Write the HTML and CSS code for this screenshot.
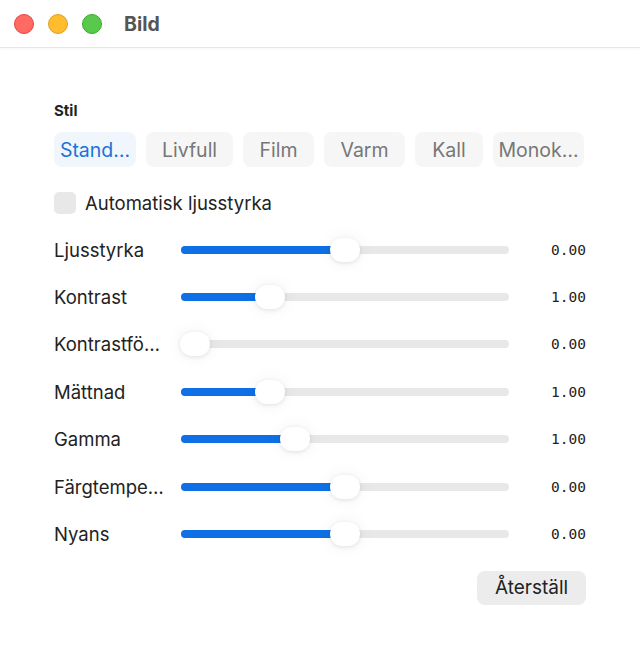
FILE: index.html
```html
<!DOCTYPE html>
<html lang="sv">
<head>
  <meta charset="UTF-8">
  <title>Bild</title>
  <link rel="stylesheet" href="styles.css">
</head>
<body>

  <div class="titlebar">
    <span class="light red"></span>
    <span class="light yellow"></span>
    <span class="light green"></span>
    <span class="title">Bild</span>
  </div>

  <div class="panel">
    <div class="section-label">Stil</div>
    <div class="styles">
      <div class="pill selected">Stand…</div>
      <div class="pill">Livfull</div>
      <div class="pill">Film</div>
      <div class="pill">Varm</div>
      <div class="pill">Kall</div>
      <div class="pill">Monok…</div>
    </div>

    <label class="check">
      <span class="box"></span>
      Automatisk ljusstyrka
    </label>

    <div class="sliders">
      <div class="row">
        <span class="name">Ljusstyrka</span>
        <div class="track"><div class="fill" style="width: 164px"></div><div class="thumb" style="left: 149px"></div></div>
        <span class="value">0.00</span>
      </div>
      <div class="row">
        <span class="name">Kontrast</span>
        <div class="track"><div class="fill" style="width: 89px"></div><div class="thumb" style="left: 74px"></div></div>
        <span class="value">1.00</span>
      </div>
      <div class="row">
        <span class="name">Kontrastfö…</span>
        <div class="track"><div class="fill" style="width: 0"></div><div class="thumb" style="left: -1px"></div></div>
        <span class="value">0.00</span>
      </div>
      <div class="row">
        <span class="name">Mättnad</span>
        <div class="track"><div class="fill" style="width: 89px"></div><div class="thumb" style="left: 74px"></div></div>
        <span class="value">1.00</span>
      </div>
      <div class="row">
        <span class="name">Gamma</span>
        <div class="track"><div class="fill" style="width: 114px"></div><div class="thumb" style="left: 99px"></div></div>
        <span class="value">1.00</span>
      </div>
      <div class="row">
        <span class="name">Färgtempe…</span>
        <div class="track"><div class="fill" style="width: 164px"></div><div class="thumb" style="left: 149px"></div></div>
        <span class="value">0.00</span>
      </div>
      <div class="row">
        <span class="name">Nyans</span>
        <div class="track"><div class="fill" style="width: 164px"></div><div class="thumb" style="left: 149px"></div></div>
        <span class="value">0.00</span>
      </div>
    </div>

    <div class="actions">
      <button class="reset">Återställ</button>
    </div>
  </div>

</body>
</html>
```

FILE: styles.css
```css
:root {
  --text: #222;
  --muted: #777;
  --blue: #0f70e6;
  --track: #e8e8e8;
}

body {
  font-family: Inter, 'Noto Sans', sans-serif;
  margin: 0;
  background: #fff;
  color: var(--text);
}

.titlebar {
  height: 47px;
  display: flex;
  align-items: center;
  padding-left: 14px;
  border-bottom: 1px solid #e6e6e6;
  box-shadow: 0 1px 3px rgba(0,0,0,0.04);
}

.light {
  width: 20px;
  height: 20px;
  border-radius: 50%;
  margin-right: 14px;
  box-sizing: border-box;
}

.red { background: #ff6a63; border: 1px solid #e0443e; }
.yellow { background: #ffbd2e; border: 1px solid #dea123; }
.green { background: #58c94a; border: 1px solid #3aab2a; }

.title {
  margin-left: 8px;
  font-size: 19.5px;
  font-weight: 700;
  color: #555;
}

.panel {
  padding: 54px 54px 0 54px;
}

.section-label {
  font-size: 15px;
  font-weight: 700;
  line-height: 18px;
}

.styles {
  display: grid;
  grid-template-columns: 82px 87px 71px 81px 68px 91px;
  column-gap: 10px;
  margin-top: 12px;
}

.pill {
  height: 35px;
  display: flex;
  align-items: center;
  justify-content: center;
  border-radius: 8px;
  background: #f6f6f6;
  color: var(--muted);
  font-size: 19.5px;
}

.pill.selected {
  background: #f1f6fd;
  color: #1a73d8;
}

.check {
  display: flex;
  align-items: center;
  gap: 9px;
  margin-top: 24px;
  height: 24px;
  font-size: 18.5px;
}

.box {
  width: 22px;
  height: 22px;
  border-radius: 5px;
  background: #e8e8e8;
}

.sliders {
  margin-top: 11px;
}

.row {
  display: grid;
  grid-template-columns: 127px 328px 1fr;
  align-items: center;
  height: 47.4px;
}

.name {
  font-size: 18.5px;
  white-space: nowrap;
}

.track {
  position: relative;
  height: 8px;
  border-radius: 4px;
  background: var(--track);
}

.fill {
  height: 8px;
  border-radius: 4px;
  background: var(--blue);
}

.thumb {
  position: absolute;
  top: -8px;
  width: 30px;
  height: 24px;
  border-radius: 12px;
  background: #fff;
  box-shadow: 0 1px 4px rgba(0,0,0,0.1), 0 0 18px rgba(0,0,0,0.06);
}

.value {
  text-align: right;
  font-family: 'DejaVu Sans Mono', 'Liberation Mono', monospace;
  font-size: 14.5px;
}

.actions {
  display: flex;
  justify-content: flex-end;
  margin-top: 13px;
}

.reset {
  width: 109px;
  height: 34px;
  border: none;
  border-radius: 8px;
  background: #ececec;
  color: var(--text);
  font-family: inherit;
  font-size: 19px;
}
```
